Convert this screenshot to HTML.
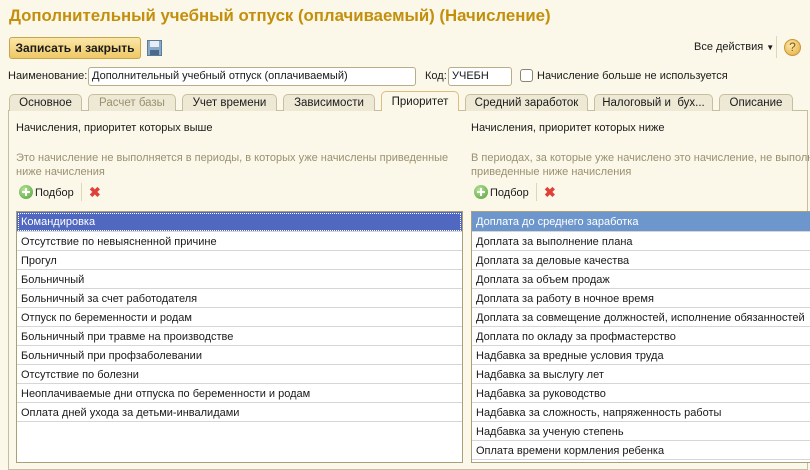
<!DOCTYPE html>
<html><head><meta charset="utf-8"><style>
*{margin:0;padding:0;box-sizing:border-box}
body{width:810px;height:467px;overflow:hidden;background:#fbf8e9;font-family:"Liberation Sans",Arial,sans-serif;font-size:11px;color:#1a1a1a;position:relative}
.a{position:absolute;white-space:nowrap}
.title{left:9px;top:6px;font-size:16.8px;font-weight:bold;color:#c38f0c}
.btn{left:9px;top:37px;width:132px;height:22px;border:1px solid #c9a449;border-radius:3px;background:linear-gradient(#fbe7a8,#eec865);font-weight:bold;font-size:12px;line-height:20px;text-align:center}
.inp{height:19px;border:1px solid #b7ad8a;border-radius:3px;background:#fff;padding-left:3px;line-height:17px;font-size:11px}
.tab{top:94px;height:17px;border:1px solid #c6bf9f;border-bottom:none;border-radius:5px 5px 0 0;background:#ede9d5;text-align:center;line-height:16px;font-size:11.5px}
.tab.act{top:91px;height:20px;line-height:20px;background:#fbf8e9;border-color:#d9bf7a;z-index:2}
.panel{left:8px;top:110px;width:800px;height:360px;border:1px solid #c6bf9f}
.list{top:211px;border:1px solid #a8a078;background:#fff;overflow:hidden}
.row{height:19px;border-bottom:1px solid #d6d6d6;padding-left:4px;line-height:21px;font-size:11px;white-space:nowrap}
.sel1{background:#5068c0;color:#fff;outline:1px dotted #fff;outline-offset:-2px}
.sel2{background:#6d97cc;color:#fff}
.gray{color:#9a9070}
.plus{display:inline-block;width:14px;height:14px;border-radius:50%;background:radial-gradient(circle at 40% 35%,#b8e69a,#4f9e33);vertical-align:-3px;position:relative;margin-right:2px}
.plus:before{content:"";position:absolute;left:3px;top:6px;width:8px;height:2px;background:#fff}
.plus:after{content:"";position:absolute;left:6px;top:3px;width:2px;height:8px;background:#fff}
.x{color:#e0403a;font-weight:bold;font-size:14px}
</style></head><body>
<div class="a title">Дополнительный учебный отпуск (оплачиваемый) (Начисление)</div>
<div class="a btn">Записать и закрыть</div>
<svg class="a" style="left:147px;top:40px" width="15" height="16"><rect x="0.5" y="0.5" width="14" height="15" fill="#8aa9c9" stroke="#5a7a9c"/><rect x="3" y="1" width="9" height="6" fill="#e8eef5"/><rect x="3" y="10" width="9" height="5" fill="#4a6a8c"/></svg>
<div class="a" style="left:694px;top:41px">Все действия <span style="font-size:8px">▼</span></div>
<div class="a" style="left:776px;top:36px;width:1px;height:22px;background:#ddd6bb"></div>
<div class="a" style="left:784px;top:39px;width:17px;height:17px;border-radius:50%;background:radial-gradient(circle at 40% 35%,#fde9a8,#e2a93a);border:1px solid #c9973a;text-align:center;font-size:12px;line-height:15px;color:#7a5a20">?</div>
<div class="a" style="left:8px;top:70px">Наименование:</div>
<div class="a inp" style="left:88px;top:67px;width:328px">Дополнительный учебный отпуск (оплачиваемый)</div>
<div class="a" style="left:425px;top:70px">Код:</div>
<div class="a inp" style="left:448px;top:67px;width:64px">УЧЕБН</div>
<div class="a" style="left:520px;top:69px;width:13px;height:13px;border:1px solid #8a8470;border-radius:3px;background:#fff"></div>
<div class="a" style="left:537px;top:70px">Начисление больше не используется</div>
<div class="a panel"></div>
<div class="a tab" style="left:9px;width:73px">Основное</div>
<div class="a tab gray" style="left:88px;width:88px">Расчет базы</div>
<div class="a tab" style="left:182px;width:95px">Учет времени</div>
<div class="a tab" style="left:283px;width:92px">Зависимости</div>
<div class="a tab act" style="left:381px;width:78px">Приоритет</div>
<div class="a tab" style="left:465px;width:123px">Средний заработок</div>
<div class="a tab" style="left:594px;width:119px">Налоговый и &nbsp;бух...</div>
<div class="a tab" style="left:719px;width:74px">Описание</div>
<div class="a" style="left:16px;top:122px">Начисления, приоритет которых выше</div>
<div class="a gray" style="left:16px;top:151px;line-height:14px">Это начисление не выполняется в периоды, в которых уже начислены приведенные<br>ниже начисления</div>
<div class="a" style="left:19px;top:185px"><span class="plus"></span>Подбор</div>
<div class="a" style="left:81px;top:183px;width:1px;height:18px;background:#ddd6bb"></div>
<div class="a x" style="left:89px;top:184px">✖</div>
<div class="a" style="left:471px;top:122px">Начисления, приоритет которых ниже</div>
<div class="a gray" style="left:471px;top:151px;line-height:14px">В периодах, за которые уже начислено это начисление, не выполняются<br>приведенные ниже начисления</div>
<div class="a" style="left:474px;top:185px"><span class="plus"></span>Подбор</div>
<div class="a" style="left:536px;top:183px;width:1px;height:18px;background:#ddd6bb"></div>
<div class="a x" style="left:544px;top:184px">✖</div>
<div class="a list" style="left:16px;width:447px;height:252px">
<div class="row sel1" style="height:20px">Командировка</div>
<div class="row">Отсутствие по невыясненной причине</div>
<div class="row">Прогул</div>
<div class="row">Больничный</div>
<div class="row">Больничный за счет работодателя</div>
<div class="row">Отпуск по беременности и родам</div>
<div class="row">Больничный при травме на производстве</div>
<div class="row">Больничный при профзаболевании</div>
<div class="row">Отсутствие по болезни</div>
<div class="row">Неоплачиваемые дни отпуска по беременности и родам</div>
<div class="row">Оплата дней ухода за детьми-инвалидами</div>
</div>
<div class="a list" style="left:471px;width:345px;height:252px">
<div class="row sel2" style="height:20px">Доплата до среднего заработка</div>
<div class="row">Доплата за выполнение плана</div>
<div class="row">Доплата за деловые качества</div>
<div class="row">Доплата за объем продаж</div>
<div class="row">Доплата за работу в ночное время</div>
<div class="row">Доплата за совмещение должностей, исполнение обязанностей</div>
<div class="row">Доплата по окладу за профмастерство</div>
<div class="row">Надбавка за вредные условия труда</div>
<div class="row">Надбавка за выслугу лет</div>
<div class="row">Надбавка за руководство</div>
<div class="row">Надбавка за сложность, напряженность работы</div>
<div class="row">Надбавка за ученую степень</div>
<div class="row">Оплата времени кормления ребенка</div>
</div>
</body></html>
